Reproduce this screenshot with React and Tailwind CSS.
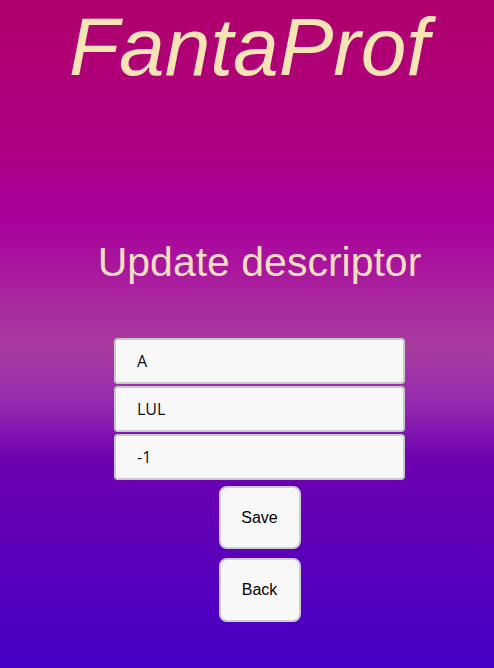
export default function App() {
  return (
    <div
      className="w-[494px] h-[668px] overflow-hidden flex flex-col items-center"
      style={{
        fontFamily: '"Liberation Sans", Arial, sans-serif',
      }}
    >
      <div
        className="absolute inset-0 -z-10"
        style={{
          background:
            "linear-gradient(180deg, #b0006c 0%, #ae0084 22%, #aa009c 33%, #a83ca0 52%, #962cb0 60%, #6e00b0 69%, #4600c6 100%)",
        }}
      />
      <h1 className="m-0 text-[82px] italic font-normal leading-[94px] text-[#f6e4b4] pl-[4px]">FantaProf</h1>
      <h2 className="mt-[145px] text-[41px] font-normal leading-[47px] text-[#f3dfc0] pl-[25px]">Update descriptor</h2>
      <div className="mt-[52px] flex flex-col items-center pl-[25px]">
        <div className="flex flex-col gap-[2px]">
          {["A", "LUL", "-1"].map((v) => (
            <div
              key={v}
              className="w-[291px] h-[46px] bg-[#f8f8f8] border-2 border-[#c9c9c9] rounded-[4px] flex items-center pl-[21px] text-[16px] text-[#0c0c1c]"
              style={{ fontFamily: '"Open Sans", "Liberation Sans", sans-serif' }}
            >
              {v}
            </div>
          ))}
        </div>
        <button className="mt-[6px] w-[82px] h-[63px] bg-[#f8f8f8] border-2 border-[#cdcdd6] rounded-[8px] text-[16px] text-black">
          Save
        </button>
        <button className="mt-[9px] w-[82px] h-[64px] bg-[#f8f8f8] border-2 border-[#cdcdd6] rounded-[8px] text-[16px] text-black">
          Back
        </button>
      </div>
    </div>
  );
}
